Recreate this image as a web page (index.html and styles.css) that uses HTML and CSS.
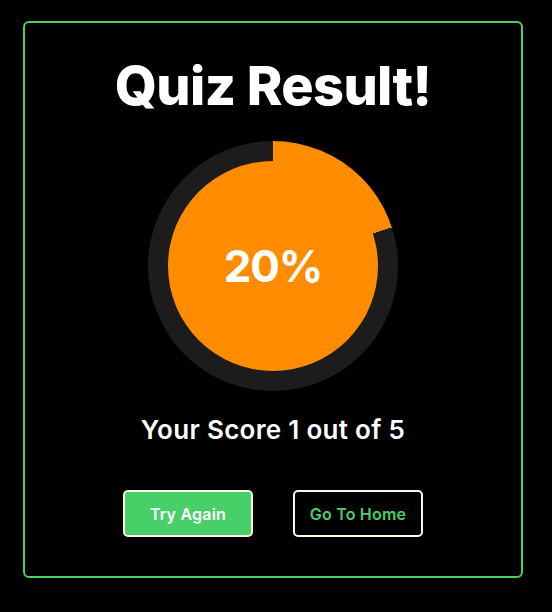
FILE: index.html
```html
<!DOCTYPE html>
<html>
<head>
<meta charset="utf-8">
<link rel="stylesheet" href="styles.css">
</head>
<body>
<div class="card">
  <h1 class="title">Quiz Result!</h1>
  <div class="ring">
    <div class="inner"><span class="pct">20%</span></div>
  </div>
  <p class="score">Your Score 1 out of 5</p>
  <div class="actions">
    <button class="btn btn-primary">Try Again</button>
    <button class="btn btn-outline">Go To Home</button>
  </div>
</div>
</body>
</html>
```
FILE: styles.css
```css
html, body {
  margin: 0;
  padding: 0;
  background: #000;
  font-family: Inter, "Open Sans", sans-serif;
  color: #fff;
}
.card {
  box-sizing: border-box;
  width: 500px;
  margin: 21px 0 0 23px;
  border: 2px solid #4ccf63;
  border-radius: 6px;
  padding: 36px 0 39px;
  display: flex;
  flex-direction: column;
  align-items: center;
}
.title {
  margin: 0;
  font-size: 54px;
  line-height: 1;
  font-weight: 800;
  letter-spacing: -0.6px;
}
.ring {
  margin-top: 28px;
  width: 250px;
  height: 250px;
  border-radius: 50%;
  background: conic-gradient(#ff8c00 0 72deg, #1c1c1c 72deg 360deg);
  display: flex;
  align-items: center;
  justify-content: center;
}
.inner {
  width: 210px;
  height: 210px;
  border-radius: 50%;
  background: #ff8c00;
  display: flex;
  align-items: center;
  justify-content: center;
}
.pct {
  font-size: 44px;
  font-weight: 700;
  line-height: 1;
  letter-spacing: -1.2px;
}
.score {
  margin: 26px 0 0;
  font-size: 26px;
  line-height: 1;
  font-weight: 600;
  letter-spacing: 0.3px;
}
.actions {
  margin-top: 47px;
  display: flex;
  gap: 40px;
}
.btn {
  box-sizing: border-box;
  width: 130px;
  height: 47px;
  border: 2px solid #fff6e4;
  border-radius: 5px;
  font-family: inherit;
  font-size: 16px;
  font-weight: 600;
  letter-spacing: 0.2px;
  cursor: pointer;
}
.btn-primary {
  background: #48cf68;
  color: #fff;
}
.btn-outline {
  background: #000;
  color: #48cf68;
}
```
